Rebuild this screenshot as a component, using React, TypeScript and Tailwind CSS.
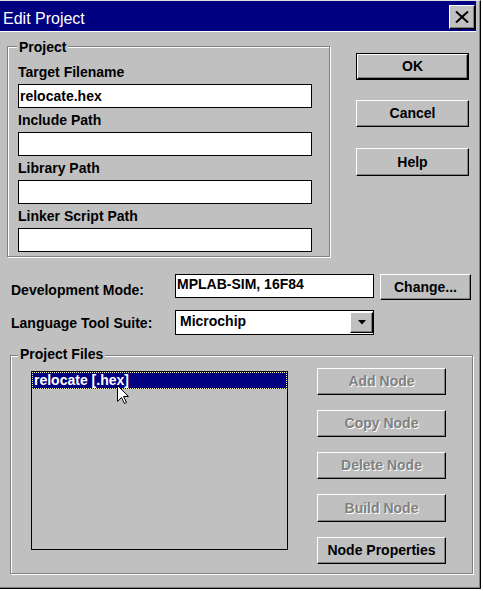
import React from "react";

const txt = "text-[14px] font-bold leading-[17px]";

function Btn({
  children,
  className = "",
  disabled = false,
}: {
  children: React.ReactNode;
  className?: string;
  disabled?: boolean;
}) {
  return (
    <div
      className={`flex items-center justify-center bg-[#c0c0c0] border-t border-l border-t-white border-l-white border-r border-b border-r-black border-b-black shadow-[inset_-1px_-1px_0_#808080] ${txt} ${
        disabled ? "text-[#808080] [text-shadow:1px_1px_0_#ffffff]" : "text-black"
      } ${className}`}
    >
      {children}
    </div>
  );
}

function Group({
  label,
  labelCls,
  className,
  children,
}: {
  label: string;
  labelCls: string;
  className: string;
  children: React.ReactNode;
}) {
  return (
    <div
      className={`relative border border-[#808080] shadow-[inset_1px_1px_0_#ffffff,1px_1px_0_#ffffff] ${className}`}
    >
      <span className={`absolute bg-[#c0c0c0] px-[2px] text-black ${txt} ${labelCls}`}>{label}</span>
      {children}
    </div>
  );
}

function Field({ label, value = "" }: { label: string; value?: string }) {
  return (
    <div className="flex flex-col">
      <div className={`h-[17px] text-black ${txt}`}>{label}</div>
      <div className="mt-[3px] h-[24px] w-[294px] border border-black bg-white pl-[1px] text-[14px] font-bold leading-[22px] text-black">
        {value}
      </div>
    </div>
  );
}

export default function App() {
  return (
    <div className="w-[483px] h-[591px] overflow-hidden bg-white font-['Liberation_Sans',Arial,sans-serif]">
      <div className="flex h-[589px] w-[481px] flex-col border-t border-r border-b border-t-[#dfdfdf] border-r-black border-b-black bg-[#c0c0c0] pr-[4px] pb-[3px] shadow-[inset_-1px_-1px_0_#808080]">
        {/* Title bar */}
        <div className="flex h-[31px] shrink-0 items-start justify-between border-b border-b-white bg-[#000080]">
          <div className="pl-[3px] pt-[9px] text-[16px] leading-[18px] text-white">Edit Project</div>
          <div className="mt-[4px] mr-[1px] flex h-[24px] w-[26px] items-center justify-center border-t border-l border-t-white border-l-white border-r border-b border-r-black border-b-black bg-[#c0c0c0] shadow-[inset_-1px_-1px_0_#808080]">
            <svg width="14" height="12" viewBox="0 0 14 12">
              <path d="M1 0.5 L13 11.5 M13 0.5 L1 11.5" stroke="#000" strokeWidth="2" />
            </svg>
          </div>
        </div>

        {/* Top section */}
        <div className="flex items-start">
          <Group label="Project" labelCls="left-[9px] -top-[8px]" className="ml-[7px] mt-[14px] h-[211px] w-[323px]">
            <div className="flex flex-col gap-[4px] pl-[10px] pt-[17px]">
              <Field label="Target Filename" value="relocate.hex" />
              <Field label="Include Path" />
              <Field label="Library Path" />
              <Field label="Linker Script Path" />
            </div>
          </Group>
          <div className="ml-[26px] mt-[21px] flex flex-col">
            <div className="h-[27px] w-[113px] border border-black">
              <Btn className="h-full w-full">OK</Btn>
            </div>
            <Btn className="mt-[20px] h-[27px] w-[113px]">Cancel</Btn>
            <Btn className="mt-[21px] h-[28px] w-[113px]">Help</Btn>
          </div>
        </div>

        {/* Development Mode */}
        <div className="mt-[17px] flex items-start">
          <div className={`ml-[11px] w-[164px] pt-[8px] text-black ${txt}`}>Development Mode:</div>
          <div className="h-[24px] w-[199px] border border-black bg-white pl-[1px] text-[14px] font-bold leading-[18px] text-black">
            MPLAB-SIM, 16F84
          </div>
          <Btn className="ml-[6px] h-[26px] w-[91px]">Change...</Btn>
        </div>

        {/* Language Tool Suite */}
        <div className="mt-[10px] flex items-start">
          <div className={`ml-[11px] w-[164px] pt-[5px] text-black ${txt}`}>Language Tool Suite:</div>
          <div className="flex h-[25px] w-[199px] items-start justify-between border border-black bg-white">
            <div className="pl-[4px] pt-[2px] text-[14px] font-bold leading-[17px] text-black">Microchip</div>
            <div className="mt-[1px] flex h-[21px] w-[23px] items-center justify-center border-t border-l border-t-white border-l-white border-r border-b border-r-black border-b-black bg-[#c0c0c0] shadow-[inset_-1px_-1px_0_#808080]">
              <svg width="8" height="5" viewBox="0 0 8 5">
                <path d="M0 0 H8 L4 4.5 Z" fill="#000" />
              </svg>
            </div>
          </div>
        </div>

        {/* Project Files */}
        <Group label="Project Files" labelCls="left-[7px] -top-[10px]" className="ml-[10px] mt-[20px] h-[219px] w-[463px] shrink-0">
          <div className="flex items-start pl-[20px] pt-[12px]">
            <div className="relative mt-[3px] h-[179px] w-[257px] border border-black bg-[#c0c0c0]">
              <div className="h-[17px] w-full border border-dotted border-[#ffffa0] bg-[#000080] pl-[1px] text-[14px] font-bold leading-[15px] text-white">
                relocate [.hex]
              </div>
              <svg
                className="absolute left-[85px] top-[13px]"
                width="13"
                height="20"
                viewBox="0 0 13 20"
              >
                <path
                  d="M0.5 0.5 L0.5 16.5 L4.5 12.5 L7.5 18.5 L9.5 17.5 L6.5 11.5 L11.5 11.5 Z"
                  fill="#fff"
                  stroke="#000"
                  strokeWidth="1"
                />
              </svg>
            </div>
            <div className="ml-[29px] flex flex-col gap-[15px]">
              <Btn disabled className="h-[27px] w-[129px]">Add Node</Btn>
              <Btn disabled className="h-[27px] w-[129px]">Copy Node</Btn>
              <Btn disabled className="h-[27px] w-[129px]">Delete Node</Btn>
              <Btn disabled className="h-[28px] w-[129px]">Build Node</Btn>
              <Btn className="h-[27px] w-[129px]">Node Properties</Btn>
            </div>
          </div>
        </Group>
      </div>
    </div>
  );
}
